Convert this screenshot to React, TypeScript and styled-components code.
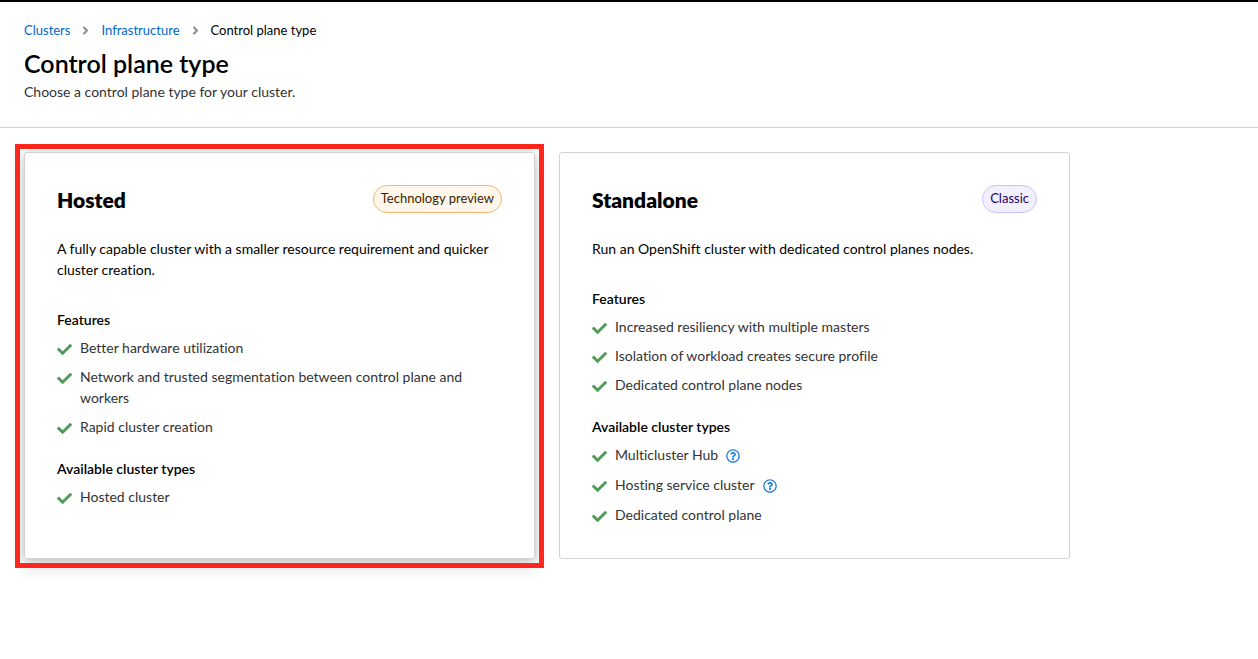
import React from 'react';
import styled, { createGlobalStyle } from 'styled-components';
import { FaAngleRight, FaCheck, FaRegQuestionCircle } from 'react-icons/fa';

const GlobalStyle = createGlobalStyle`
  *, *::before, *::after { box-sizing: border-box; }
  body {
    margin: 0;
    background: #fff;
    color: #000;
    font-family: Lato, "Open Sans", sans-serif;
    font-size: 14px;
    line-height: 21px;
    font-variant-ligatures: none;
  }
  h1, h2, h3, p, ul, ol { margin: 0; padding: 0; }
  ul, ol { list-style: none; }
`;

const Page = styled.div`
  border-top: 2px solid #000;
`;

const Header = styled.header`
  padding: 18px 24px 25px;
  border-bottom: 1px solid #d2d2d2;
`;

const BreadcrumbList = styled.ol`
  display: flex;
  flex-wrap: wrap;
  font-size: 13px;
  line-height: 20px;
`;

const BreadcrumbItem = styled.li`
  display: flex;
  align-items: center;
`;

const BreadcrumbLink = styled.a`
  color: #06c;
  text-decoration: none;
  &:hover { text-decoration: underline; }
`;

const Divider = styled(FaAngleRight)`
  width: 13px;
  height: 13px;
  margin: 0 9px;
  color: #8a8d90;
`;

const PageTitle = styled.h1`
  margin-top: 7px;
  font-size: 25px;
  font-weight: 600;
  line-height: 32px;
`;

const Subtitle = styled.p`
  margin-top: 2px;
  color: #333;
`;

const Cards = styled.main`
  display: grid;
  grid-template-columns: repeat(auto-fit, minmax(300px, 511px));
  gap: 24px;
  padding: 24px;
`;

const Card = styled.section<{ $selected?: boolean }>`
  position: relative;
  padding: 32px 32px 33px;
  border: 1px solid #d2d2d2;
  border-radius: 3px;
  box-shadow: ${({ $selected }) =>
    $selected ? '0 8px 16px rgba(3, 3, 3, 0.16), 0 0 6px rgba(3, 3, 3, 0.16)' : 'none'};

  &::after {
    content: ${({ $selected }) => ($selected ? '""' : 'none')};
    position: absolute;
    inset: -9px -10px -10px;
    border: 5px solid #ff261e;
    pointer-events: none;
  }
`;

const CardHeader = styled.div`
  display: flex;
  align-items: flex-start;
  justify-content: space-between;
  gap: 16px;
`;

const CardTitle = styled.h2`
  font-size: 21px;
  font-weight: 800;
  line-height: 30px;
`;

const tones = {
  orange: { text: '#3b1f00', fill: '#fff6ec', line: '#f4b678' },
  purple: { text: '#1f0066', fill: '#f2f0fc', line: '#cbc1ff' },
};

type Tone = keyof typeof tones;

const Label = styled.span<{ $tone: Tone }>`
  padding: 2px 7px 4px;
  border: 1px solid ${({ $tone }) => tones[$tone].line};
  border-radius: 14px;
  background: ${({ $tone }) => tones[$tone].fill};
  color: ${({ $tone }) => tones[$tone].text};
  font-size: 13px;
  line-height: 20px;
  white-space: nowrap;
`;

const Description = styled.p`
  margin-top: 23px;
`;

const GroupTitle = styled.h3<{ $first?: boolean }>`
  margin-top: ${({ $first }) => ($first ? 30 : 22)}px;
  font-size: 14px;
  font-weight: 600;
  line-height: 20px;
`;

const FeatureList = styled.ul`
  display: flex;
  flex-direction: column;
  gap: 8px;
  margin-top: 7px;
  color: #333;
`;

const FeatureItem = styled.li`
  display: flex;
  align-items: flex-start;
  gap: 8px;
`;

const CheckIcon = styled(FaCheck)`
  flex: none;
  width: 15px;
  height: 15px;
  margin-top: 5px;
  color: #4f9a56;
`;

const HelpButton = styled.button`
  display: flex;
  align-items: flex-end;
  height: 22px;
  padding: 0 0 3px;
  border: 0;
  background: none;
  color: #1f7fdb;
  font-size: 14px;
  cursor: pointer;
`;

interface Feature {
  text: string;
  help?: boolean;
}

interface ControlPlane {
  title: string;
  label: string;
  tone: Tone;
  selected?: boolean;
  description: string;
  groups: { title: string; items: Feature[] }[];
}

const controlPlanes: ControlPlane[] = [
  {
    title: 'Hosted',
    label: 'Technology preview',
    tone: 'orange',
    selected: true,
    description: 'A fully capable cluster with a smaller resource requirement and quicker cluster creation.',
    groups: [
      {
        title: 'Features',
        items: [
          { text: 'Better hardware utilization' },
          { text: 'Network and trusted segmentation between control plane and workers' },
          { text: 'Rapid cluster creation' },
        ],
      },
      { title: 'Available cluster types', items: [{ text: 'Hosted cluster' }] },
    ],
  },
  {
    title: 'Standalone',
    label: 'Classic',
    tone: 'purple',
    description: 'Run an OpenShift cluster with dedicated control planes nodes.',
    groups: [
      {
        title: 'Features',
        items: [
          { text: 'Increased resiliency with multiple masters' },
          { text: 'Isolation of workload creates secure profile' },
          { text: 'Dedicated control plane nodes' },
        ],
      },
      {
        title: 'Available cluster types',
        items: [
          { text: 'Multicluster Hub', help: true },
          { text: 'Hosting service cluster', help: true },
          { text: 'Dedicated control plane' },
        ],
      },
    ],
  },
];

export default function App() {
  return (
    <Page>
      <GlobalStyle />
      <Header>
        <nav aria-label="Breadcrumb">
          <BreadcrumbList>
            <BreadcrumbItem>
              <BreadcrumbLink href="#clusters">Clusters</BreadcrumbLink>
              <Divider aria-hidden />
            </BreadcrumbItem>
            <BreadcrumbItem>
              <BreadcrumbLink href="#infrastructure">Infrastructure</BreadcrumbLink>
              <Divider aria-hidden />
            </BreadcrumbItem>
            <BreadcrumbItem aria-current="page">Control plane type</BreadcrumbItem>
          </BreadcrumbList>
        </nav>
        <PageTitle>Control plane type</PageTitle>
        <Subtitle>Choose a control plane type for your cluster.</Subtitle>
      </Header>
      <Cards>
        {controlPlanes.map((plane) => (
          <Card key={plane.title} $selected={plane.selected}>
            <CardHeader>
              <CardTitle>{plane.title}</CardTitle>
              <Label $tone={plane.tone}>{plane.label}</Label>
            </CardHeader>
            <Description>{plane.description}</Description>
            {plane.groups.map((group, index) => (
              <React.Fragment key={group.title}>
                <GroupTitle $first={index === 0}>{group.title}</GroupTitle>
                <FeatureList>
                  {group.items.map((item) => (
                    <FeatureItem key={item.text}>
                      <CheckIcon aria-hidden />
                      <span>{item.text}</span>
                      {item.help && (
                        <HelpButton type="button" aria-label={`More about ${item.text}`}>
                          <FaRegQuestionCircle />
                        </HelpButton>
                      )}
                    </FeatureItem>
                  ))}
                </FeatureList>
              </React.Fragment>
            ))}
          </Card>
        ))}
      </Cards>
    </Page>
  );
}
